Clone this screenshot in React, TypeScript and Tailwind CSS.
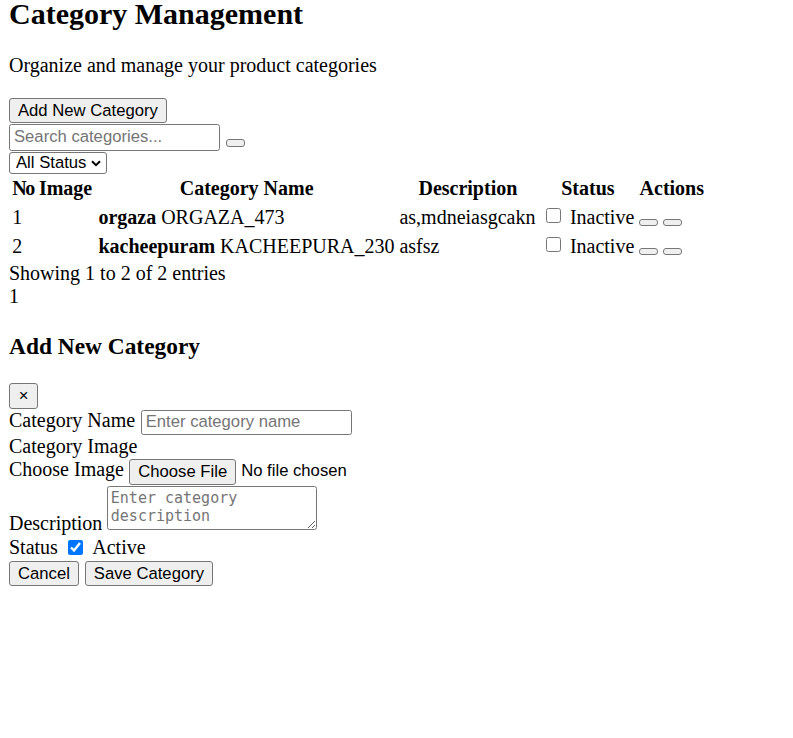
import React from "react";

const ctl = "font-['Liberation_Sans',Arial,sans-serif] text-[16.67px] text-black";
const btn = `${ctl} bg-[#efefef] border border-[#767676] rounded-[3px] px-[8px] whitespace-nowrap`;
const emptyBtn = "block w-[18.5px] h-[7.5px] bg-[#efefef] border border-[#767676] rounded-[3px]";
const th = "px-[1.25px] pt-[1.25px] pb-[1px] h-[26px] align-top font-bold whitespace-nowrap";
const td = "px-[1.25px] pt-[2.5px] pb-[1px] h-[27px] align-top whitespace-nowrap";

const rows = [
  { no: 1, name: "orgaza", code: "ORGAZA_473", desc: "as,mdneiasgcakn" },
  { no: 2, name: "kacheepuram", code: "KACHEEPURA_230", desc: "asfsz" },
];

export default function App() {
  return (
    <div className="pl-[9px] font-['Liberation_Serif','Times_New_Roman',serif] text-[20px] leading-[23px] text-black bg-white">
      <h1 className="-mt-[4px] text-[30px] leading-[35px] font-bold whitespace-nowrap">
        Category Management
      </h1>
      <p className="mt-[23px]">Organize and manage your product categories</p>

      <div className="mt-[21px] flex">
        <button className={`${btn} h-[25px]`}>Add New Category</button>
      </div>

      <div className="mt-[1px] flex items-start">
        <input
          type="text"
          placeholder="Search categories..."
          className={`${ctl} w-[211px] h-[26.5px] border border-[#767676] rounded-[2.5px] px-[4px] bg-white placeholder:text-[#757575]`}
        />
        <button className={`${emptyBtn} ml-[6px] mt-[15px] w-[19px] h-[6.5px]`} />
      </div>

      <div className="mt-[1px] flex">
        <div className="relative">
          <select
            className={`${ctl} appearance-none block w-[98px] h-[22px] border border-[#767676] rounded-[3px] pl-[6px] bg-white leading-[20px]`}
            defaultValue="all"
          >
            <option value="all">All Status</option>
            <option value="active">Active</option>
            <option value="inactive">Inactive</option>
          </select>
          <svg
            className="pointer-events-none absolute left-[81.5px] top-[8px]"
            width="10"
            height="7"
            viewBox="0 0 10 7"
          >
            <path d="M1 1.2 L5 5.2 L9 1.2" fill="none" stroke="#000" strokeWidth="2" />
          </svg>
        </div>
      </div>

      <table className="table-fixed border-separate border-spacing-x-[2.5px] border-spacing-y-[2px] w-[698.5px]">
        <thead>
          <tr>
            <th className={`${th} w-[24.5px] text-left tracking-[-1.5px]`}>No</th>
            <th className={`${th} w-[57.25px] text-left`}>Image</th>
            <th className={`${th} w-[297.5px] text-center`}>Category Name</th>
            <th className={`${th} w-[138.75px] text-center`}>Description</th>
            <th className={`${th} w-[96px] text-center`}>Status</th>
            <th className={`${th} w-[67px] text-center`}>Actions</th>
          </tr>
        </thead>
        <tbody>
          {rows.map((r) => (
            <tr key={r.no}>
              <td className={td}>{r.no}</td>
              <td className={td}></td>
              <td className={td}>
                <strong className="font-bold">{r.name}</strong> {r.code}
              </td>
              <td className={td}>{r.desc}</td>
              <td className={td}>
                <div className="flex items-start">
                  <input type="checkbox" className="ml-[5px] mt-[1.5px] w-[15px] h-[15px] shrink-0" />
                  <span className="ml-[9px]">Inactive</span>
                </div>
              </td>
              <td className={td}>
                <div className="flex items-start gap-[5.5px] pt-[12.8px]">
                  <button className={emptyBtn} />
                  <button className={emptyBtn} />
                </div>
              </td>
            </tr>
          ))}
        </tbody>
      </table>

      <div>Showing 1 to 2 of 2 entries</div>
      <div>1</div>

      <h3 className="mt-[25px] text-[23.4px] leading-[26px] font-bold whitespace-nowrap">
        Add New Category
      </h3>

      <div className="mt-[24px] flex">
        <button className={`${btn} w-[29px] h-[26px] px-0 flex items-center justify-center`}>×</button>
      </div>

      <div className="flex items-start">
        <label className="w-[131.7px] shrink-0 whitespace-nowrap">Category Name</label>
        <input
          type="text"
          placeholder="Enter category name"
          className={`${ctl} mt-[1px] w-[211px] h-[25px] border border-[#767676] rounded-[2.5px] px-[4px] bg-white placeholder:text-[#757575]`}
        />
      </div>

      <div>Category Image</div>

      <div className="flex items-start">
        <label className="w-[120.3px] shrink-0 whitespace-nowrap">Choose Image</label>
        <button className={`${btn} mt-[1px] h-[26px]`}>Choose File</button>
        <span className={`${ctl} ml-[5px] mt-[1px] leading-[23px] whitespace-nowrap`}>No file chosen</span>
      </div>

      <div className="flex items-end">
        <label className="w-[98.3px] shrink-0 -mb-[5px] whitespace-nowrap">Description</label>
        <textarea
          placeholder="Enter category description"
          className="mt-[1px] block w-[209.4px] h-[44px] border border-[#767676] rounded-[2.5px] px-[2.5px] py-[2.5px] bg-white font-['DejaVu_Sans_Mono',monospace] text-[15px] leading-[18px] placeholder:text-[#757575] resize"
        />
      </div>

      <div className="mt-[6.5px] flex items-start">
        <label className="w-[59.3px] shrink-0 whitespace-nowrap">Status</label>
        <input type="checkbox" defaultChecked className="mt-[4px] w-[14.5px] h-[14.5px] shrink-0 accent-[#0075ff]" />
        <span className="ml-[9.5px]">Active</span>
      </div>

      <div className="mt-[2px] flex gap-[6px]">
        <button className={`${btn} h-[25px]`}>Cancel</button>
        <button className={`${btn} h-[25px]`}>Save Category</button>
      </div>
    </div>
  );
}
